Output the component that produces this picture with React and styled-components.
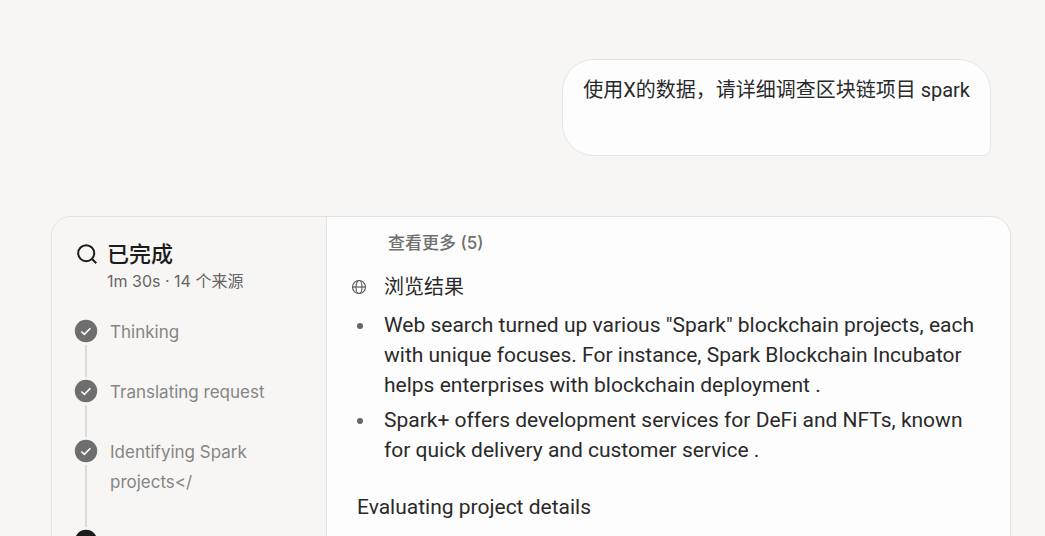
import React from 'react';
import styled, { createGlobalStyle } from 'styled-components';

const Global = createGlobalStyle`
  *, *::before, *::after { box-sizing: border-box; }
  body {
    margin: 0;
    background: #f7f6f4;
    color: #2a2a2a;
    font-family: Inter, "Noto Sans CJK SC", sans-serif;
    font-size: 20px;
    font-weight: 400;
    line-height: 30px;
  }
`;

const Page = styled.main`
  height: 100vh;
  overflow: hidden;
  display: flex;
  flex-direction: column;
  padding: 59px 34px 0 51px;
`;

const Bubble = styled.div`
  align-self: flex-end;
  flex: none;
  min-height: 97px;
  margin: 0 20px 60px 0;
  padding: 15px 20px;
  background: #fdfdfd;
  border: 1px solid #e6e6e4;
  border-radius: 32px 32px 8px 32px;
  font-family: Roboto, "Noto Sans CJK SC", sans-serif;
  p { margin: 0; }
`;

const Panel = styled.section`
  flex: none;
  display: flex;
  background: #fdfdfd;
  border: 1px solid #e2e2e0;
  border-radius: 20px;
  overflow: hidden;
`;

const Sidebar = styled.aside`
  flex: 0 0 275px;
  padding: 22px 22px 24px;
  background: #f7f6f4;
  border-right: 1px solid #e2e2e0;
`;

const Status = styled.header`
  display: grid;
  grid-template-columns: 26px 1fr;
  column-gap: 7px;
  align-items: center;
  margin-bottom: 24px;
`;

const SearchIcon = styled.svg`
  width: 22px;
  height: 22px;
  justify-self: center;
`;

const Title = styled.h2`
  margin: 0;
  font-size: 22px;
  line-height: 30px;
  font-weight: 500;
  color: #1c1c1c;
`;

const Meta = styled.p`
  grid-column: 2;
  margin: 0;
  font-size: 16px;
  line-height: 24px;
  color: #666;
`;

const Steps = styled.ol`
  list-style: none;
  margin: 0;
  padding: 0;
`;

const Step = styled.li`
  display: flex;
  gap: 12px;
  min-height: 60px;
`;

const Rail = styled.div`
  flex: none;
  width: 24px;
  display: flex;
  flex-direction: column;
  align-items: center;
  gap: 2px;
  padding-top: 2px;
  &::after {
    content: "";
    flex: 1;
    width: 2px;
    background: #dadad9;
  }
`;

const Dot = styled.svg`
  width: 24px;
  height: 24px;
  color: ${(p) => (p.$current ? '#1c1c1c' : '#6e6e6e')};
`;

const StepText = styled.span`
  flex: 1;
  padding-bottom: ${(p) => (p.$tall ? '30px' : '0')};
  font-size: 17px;
  color: #858585;
`;

const Content = styled.div`
  flex: 1;
  min-width: 0;
  padding: 11px 34px 24px 30px;
`;

const More = styled.button`
  display: block;
  margin: 0 0 14px 31px;
  padding: 0;
  border: 0;
  background: none;
  font: inherit;
  font-size: 17px;
  line-height: 30px;
  font-weight: 500;
  color: #707070;
  cursor: pointer;
`;

const Heading = styled.h3`
  display: flex;
  align-items: center;
  gap: 17px;
  margin: 0 0 8px -6px;
  font-size: 20px;
  font-weight: 400;
`;

const Globe = styled.svg`
  width: 16px;
  height: 16px;
  color: #5c5c5c;
`;

const Prose = styled.div`
  font-family: Roboto, sans-serif;
  font-size: 21px;
`;

const Findings = styled.ul`
  list-style: none;
  margin: 0 0 27px;
  padding: 0;
  display: grid;
  gap: 5px;
`;

const Finding = styled.li`
  display: flex;
  gap: 21px;
  &::before {
    content: "";
    flex: none;
    width: 6px;
    height: 6px;
    margin-top: 13px;
    border-radius: 50%;
    background: #666;
  }
`;

const Note = styled.p`
  margin: 0;
`;

const steps = [
  { text: 'Thinking' },
  { text: 'Translating request' },
  { text: 'Identifying Spark projects</', tall: true },
  { text: '', current: true },
];

const findings = [
  'Web search turned up various "Spark" blockchain projects, each with unique focuses. For instance, Spark Blockchain Incubator helps enterprises with blockchain deployment .',
  'Spark+ offers development services for DeFi and NFTs, known for quick delivery and customer service .',
];

export default function App() {
  return (
    <>
      <Global />
      <Page>
        <Bubble>
          <p>使用X的数据，请详细调查区块链项目 spark</p>
        </Bubble>
        <Panel>
          <Sidebar>
            <Status>
              <SearchIcon viewBox="0 0 22 22" fill="none" stroke="#1c1c1c" strokeWidth="2" aria-hidden="true">
                <circle cx="10.2" cy="10.2" r="8" />
                <path d="M16 16l4.3 4.3" />
              </SearchIcon>
              <Title>已完成</Title>
              <Meta>1m 30s · 14 个来源</Meta>
            </Status>
            <Steps>
              {steps.map((s, i) => (
                <Step key={i}>
                  <Rail>
                    <Dot viewBox="0 0 24 24" $current={s.current} aria-hidden="true">
                      <circle cx="12" cy="12" r="11.2" fill="currentColor" />
                      <path d="M7.3 12.5l3.1 2.8 6-6" fill="none" stroke="#fff" strokeWidth="1.6" />
                    </Dot>
                  </Rail>
                  <StepText $tall={s.tall}>{s.text}</StepText>
                </Step>
              ))}
            </Steps>
          </Sidebar>
          <Content>
            <More type="button">查看更多 (5)</More>
            <Heading>
              <Globe viewBox="0 0 16 16" fill="none" stroke="currentColor" strokeWidth="1.2" aria-hidden="true">
                <circle cx="8" cy="8" r="6.5" />
                <ellipse cx="8" cy="8" rx="3" ry="6.5" />
                <path d="M1.5 8h13" />
              </Globe>
              浏览结果
            </Heading>
            <Prose>
              <Findings>
                {findings.map((f) => (
                  <Finding key={f}>
                    <span>{f}</span>
                  </Finding>
                ))}
              </Findings>
              <Note>Evaluating project details</Note>
            </Prose>
          </Content>
        </Panel>
      </Page>
    </>
  );
}
